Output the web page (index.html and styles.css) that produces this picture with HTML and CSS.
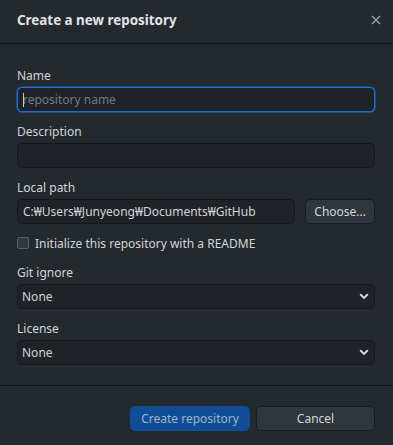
FILE: index.html
```html
<!DOCTYPE html>
<html lang="en">
<head>
  <meta charset="UTF-8">
  <meta name="viewport" content="width=device-width, initial-scale=1.0">
  <title>Create a new repository</title>
  <link rel="stylesheet" href="styles.css">
</head>
<body>
  <div class="dialog">
    <header class="dialog-header">
      <h1>Create a new repository</h1>
      <button class="close" aria-label="Close">
        <svg width="10" height="10" viewBox="0 0 10 10"><path d="M1 1L9 9M9 1L1 9" stroke="#9ea4aa" stroke-width="1.3"/></svg>
      </button>
    </header>

    <div class="dialog-body">
      <div class="field">
        <label for="name">Name</label>
        <div class="input-wrap">
          <input type="text" id="name" class="input focused" placeholder="repository name">
          <span class="caret"></span>
        </div>
      </div>

      <div class="field">
        <label for="desc">Description</label>
        <input type="text" id="desc" class="input">
      </div>

      <div class="field">
        <label for="path">Local path</label>
        <div class="path-row">
          <input type="text" id="path" class="input" value="C:₩Users₩Junyeong₩Documents₩GitHub">
          <button class="btn">Choose...</button>
        </div>
      </div>

      <div class="check-row">
        <span class="checkbox"></span>
        <span>Initialize this repository with a README</span>
      </div>

      <div class="field">
        <label for="gitignore">Git ignore</label>
        <div class="select-wrap">
          <select id="gitignore" class="input"><option>None</option></select>
          <svg class="chevron" width="10" height="7" viewBox="0 0 10 7"><path d="M1.2 1.3L5 5L8.8 1.3" fill="none" stroke="#d8dce0" stroke-width="1.9"/></svg>
        </div>
      </div>

      <div class="field last">
        <label for="license">License</label>
        <div class="select-wrap">
          <select id="license" class="input"><option>None</option></select>
          <svg class="chevron" width="10" height="7" viewBox="0 0 10 7"><path d="M1.2 1.3L5 5L8.8 1.3" fill="none" stroke="#d8dce0" stroke-width="1.9"/></svg>
        </div>
      </div>
    </div>

    <footer class="dialog-footer">
      <button class="btn primary">Create repository</button>
      <button class="btn cancel">Cancel</button>
    </footer>
  </div>
</body>
</html>
```

FILE: styles.css
```css
body {
  margin: 0;
  background: #24292e;
  color: #d1d5da;
  font-family: 'Segoe UI', 'Noto Sans', 'Noto Sans CJK KR', sans-serif;
  font-size: 12px;
}
.dialog {
  width: 393px;
  height: 445px;
  background: #24292e;
}
.dialog-header {
  height: 43px;
  display: flex;
  align-items: center;
  justify-content: space-between;
  padding: 0 10px 0 17px;
  border-bottom: 1px solid #141719;
}
.dialog-header h1 {
  margin: 0;
  font-size: 13.4px;
  font-weight: bold;
  color: #e1e4e8;
  padding-bottom: 3px;
}
.close {
  background: none;
  border: none;
  padding: 0;
  width: 14px;
  height: 14px;
  display: flex;
  align-items: center;
  justify-content: center;
  margin-bottom: 4px;
}
.dialog-body {
  padding: 24px 18px 20px 17px;
  border-bottom: 1px solid #141719;
}
.field {
  margin-bottom: 12px;
}
.field.last {
  margin-bottom: 0;
}
label {
  display: block;
  line-height: 16px;
  margin-bottom: 3px;
  color: #d1d5da;
}
.input {
  box-sizing: border-box;
  width: 100%;
  height: 25px;
  background: #1f2226;
  border: 1px solid #16191c;
  border-radius: 5px;
  color: #d1d5da;
  font: inherit;
  padding: 0 5px;
  outline: none;
}
.input::placeholder {
  color: #737b83;
}
.input.focused {
  border-color: #1b6fd6;
  box-shadow: 0 0 0 0.5px #1b6fd6;
}
.input-wrap, .select-wrap {
  position: relative;
}
.caret {
  position: absolute;
  left: 6px;
  top: 6px;
  width: 1px;
  height: 14px;
  background: #c8ccd0;
}
.path-row {
  display: flex;
  gap: 10px;
}
.path-row .input {
  flex: 1;
}
.btn {
  box-sizing: border-box;
  height: 25px;
  padding: 0 8px;
  background: #2f363d;
  border: 1px solid #191c20;
  border-radius: 5px;
  color: #d1d5da;
  font: inherit;
}
.check-row {
  display: flex;
  align-items: center;
  gap: 6px;
  margin: 13px 0 16px;
  height: 12px;
}
.checkbox {
  box-sizing: border-box;
  width: 12px;
  height: 12px;
  background: #33383d;
  border: 1px solid #5b6167;
  border-radius: 2px;
}
select.input {
  appearance: none;
  -webkit-appearance: none;
  padding: 0 4px;
}
.chevron {
  position: absolute;
  right: 6px;
  top: 9px;
}
.dialog-footer {
  display: flex;
  justify-content: flex-end;
  gap: 6px;
  padding: 20px 18px 0 0;
}
.primary {
  width: 120px;
  background: #0f4e97;
  border-color: #0f4e97;
  color: #9fb2c8;
}
.cancel {
  width: 119px;
}
```
